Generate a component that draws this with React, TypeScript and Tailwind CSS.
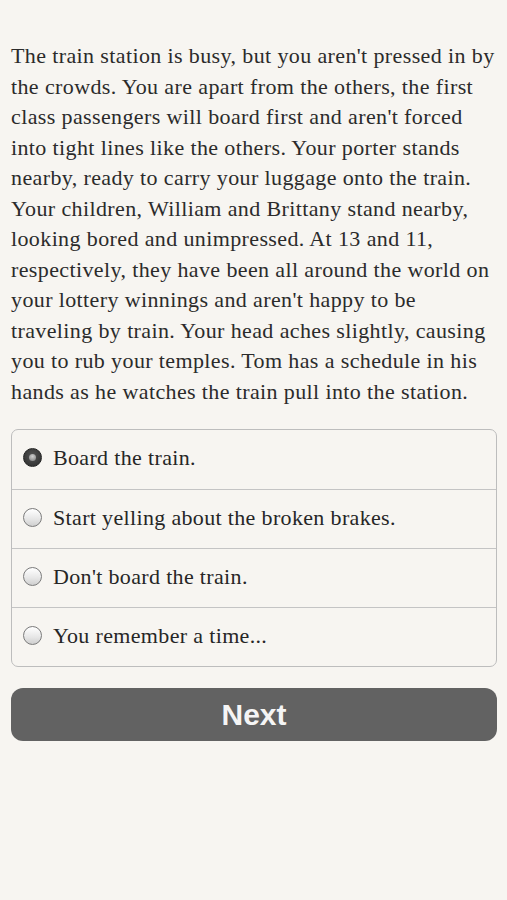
import React from "react";

const lines = [
  "The train station is busy, but you aren't pressed in by",
  "the crowds. You are apart from the others, the first",
  "class passengers will board first and aren't forced",
  "into tight lines like the others. Your porter stands",
  "nearby, ready to carry your luggage onto the train.",
  "Your children, William and Brittany stand nearby,",
  "looking bored and unimpressed. At 13 and 11,",
  "respectively, they have been all around the world on",
  "your lottery winnings and aren't happy to be",
  "traveling by train. Your head aches slightly, causing",
  "you to rub your temples. Tom has a schedule in his",
  "hands as he watches the train pull into the station.",
];

const options = [
  "Board the train.",
  "Start yelling about the broken brakes.",
  "Don't board the train.",
  "You remember a time...",
];

function Radio({ checked }: { checked: boolean }) {
  if (checked) {
    return (
      <span className="flex h-[19px] w-[19px] shrink-0 items-center justify-center rounded-full border border-[#222] bg-[radial-gradient(circle_at_50%_40%,#555,#2a2a2a)]">
        <span className="h-[7px] w-[7px] rounded-full bg-[radial-gradient(circle_at_50%_35%,#cfcfcf,#7a7a7a)]" />
      </span>
    );
  }
  return (
    <span className="h-[19px] w-[19px] shrink-0 rounded-full border-[1.5px] border-[#7b7b7b] bg-[linear-gradient(180deg,#ffffff_0%,#e6e6e6_60%,#cfcfcf_100%)]" />
  );
}

export default function App() {
  return (
    <div className="min-h-[900px] w-full bg-[#f7f5f1] px-[11px] pt-[41px]">
      <p
        className="text-[22px] leading-[30.5px] tracking-[0.38px] text-[#2b2b2b]"
        style={{ fontFamily: '"Liberation Serif", serif' }}
      >
        {lines.map((l, i) => (
          <span key={i} className="block whitespace-nowrap">
            {l}
          </span>
        ))}
      </p>
      <div className="mt-[22px] w-[486px] overflow-hidden rounded-[7px] border border-[#bdbdbd]">
        {options.map((o, i) => (
          <div
            key={i}
            className={`flex h-[59px] items-center gap-[11px] pb-[4px] pl-[11px] ${i > 0 ? "border-t border-[#c4c4c4]" : ""}`}
          >
            <Radio checked={i === 0} />
            <span
              className="whitespace-nowrap text-[22px] tracking-[0.34px] text-[#262626]"
              style={{ fontFamily: '"Liberation Serif", serif' }}
            >
              {o}
            </span>
          </div>
        ))}
      </div>
      <button
        className="mt-[21px] flex h-[53px] w-[486px] items-center justify-center rounded-[12px] bg-[#626262] text-[30px] font-bold text-[#f5f5f5]"
        style={{ fontFamily: '"Liberation Sans", Arial, sans-serif' }}
      >
        Next
      </button>
    </div>
  );
}
